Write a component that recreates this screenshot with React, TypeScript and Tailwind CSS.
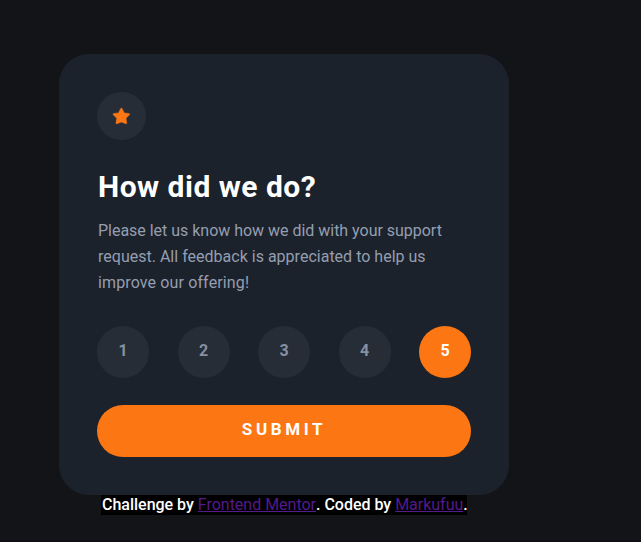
import { useState } from "react";

const ratings = [1, 2, 3, 4, 5];

function StarIcon() {
  return (
    <svg width="17" height="16" viewBox="0 0 17 16" className="overflow-visible" aria-hidden="true">
      <path
        d="m9.067.43 1.99 4.031c.112.228.33.386.58.422l4.45.647a.772.772 0 0 1 .427 1.316l-3.22 3.138a.773.773 0 0 0-.222.683l.76 4.231a.772.772 0 0 1-1.12.813l-3.98-1.492a.773.773 0 0 0-.718 0l-3.98 1.492a.772.772 0 0 1-1.119-.813l.76-4.231a.77.77 0 0 0-.222-.683L.233 6.846A.772.772 0 0 1 .661 5.53l4.449-.647a.772.772 0 0 0 .58-.422L7.68.43a.774.774 0 0 1 1.387 0Z"
        fill="#FC7614"
        stroke="#FC7614"
        strokeWidth="0.4"
      />
    </svg>
  );
}

export default function App() {
  const [selected, setSelected] = useState(5);

  return (
    <main className="h-[542px] w-full overflow-hidden border-b-2 border-[#110f15] bg-[#131418] pt-[54px] pl-[59px] font-['Roboto','Liberation_Sans',sans-serif]">
      <section className="flex h-[441px] w-[450px] flex-col rounded-[30px] bg-[#1c222b] px-[38px] pt-[38px]">
        <div className="flex h-12 w-[49px] items-center justify-center rounded-full bg-[#262d36]">
          <StarIcon />
        </div>
        <h1 className="mt-[27px] h-10 pl-px text-[30px] leading-10 font-bold tracking-[0.5px] whitespace-nowrap text-white">
          How did we do?
        </h1>
        <p className="mt-[11px] pl-px text-base leading-[26px] whitespace-nowrap text-[#959eb0]">
          <span className="block tracking-[-0.02px]">Please let us know how we did with your support</span>
          <span className="block tracking-[0.01px]">request. All feedback is appreciated to help us</span>
          <span className="block tracking-[0.13px]">improve our offering!</span>
        </p>
        <div className="mt-[30px] flex justify-between">
          {ratings.map((n) => (
            <button
              key={n}
              onClick={() => setSelected(n)}
              className={
                "flex size-[52px] items-center justify-center rounded-full pb-[2px] text-base font-bold " +
                (selected === n ? "bg-[#fc7614] text-white" : "bg-[#262d36] text-[#8590a2]")
              }
            >
              {n}
            </button>
          ))}
        </div>
        <button className="mt-[27px] h-[52px] rounded-full bg-[#fc7614] pb-[3px] text-[17px] font-bold tracking-[3.6px] text-white">
          SUBMIT
        </button>
      </section>
      <footer className="ml-[42px] h-5 w-[366px] bg-black pl-px text-base leading-5 font-medium tracking-[-0.01px] whitespace-nowrap text-white">
        Challenge by{" "}
        <a className="font-normal text-[#551a8b] underline">Frontend Mentor</a>
        . Coded by{" "}
        <a className="font-normal text-[#551a8b] underline">Markufuu</a>.
      </footer>
    </main>
  );
}
